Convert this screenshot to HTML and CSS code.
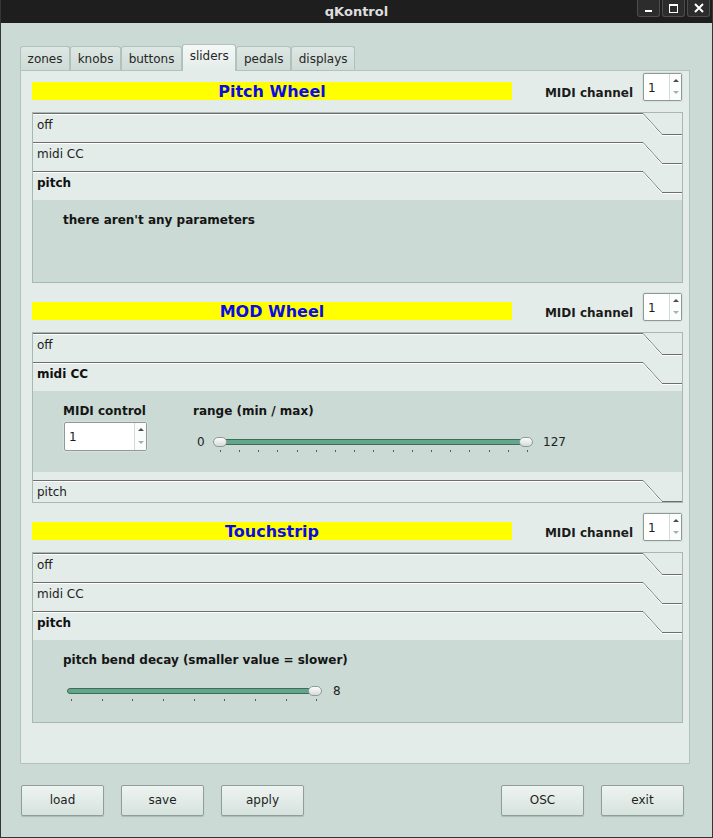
FILE: index.html
```html
<!DOCTYPE html>
<html>
<head>
<meta charset="utf-8">
<link rel="stylesheet" href="styles.css">
</head>
<body>
<div class="window">
  <div class="titlebar">
    <div></div>
    <div class="title">qKontrol</div>
    <div class="wm-buttons">
      <span class="wm-btn"><svg width="9" height="9" viewBox="0 0 9 9"><rect x="1" y="6" width="7" height="2" fill="#fff"/></svg></span>
      <span class="wm-btn"><svg width="9" height="9" viewBox="0 0 9 9"><rect x="0.5" y="0.5" width="8" height="8" fill="none" stroke="#fff"/><rect x="0" y="0" width="9" height="2" fill="#fff"/></svg></span>
      <span class="wm-btn"><svg width="10" height="10" viewBox="0 0 10 10"><path d="M1 1L9 9M9 1L1 9" stroke="#fff" stroke-width="2"/></svg></span>
    </div>
  </div>
  <div class="client">
    <div class="tabbar">
      <div class="tab">zones</div>
      <div class="tab">knobs</div>
      <div class="tab">buttons</div>
      <div class="tab active">sliders</div>
      <div class="tab">pedals</div>
      <div class="tab">displays</div>
    </div>
    <div class="page">
      <!-- Pitch Wheel -->
      <div class="section">
        <div class="section-head">
          <div class="banner">Pitch Wheel</div>
          <div class="ch-label">MIDI channel</div>
          <div class="spin ch"><span class="spin-val">1</span><span class="spin-arrows"><i class="arr-up"></i><i class="arr-down"></i></span></div>
        </div>
        <div class="toolbox">
          <div class="tb-item"><div class="tb-label">off</div><svg class="notch" width="39" height="29" viewBox="0 0 39 29"><polyline class="nd" points="0,0.5 19,21.5 39,21.5"/><polyline class="nl" points="0,1.5 19,22.5 39,22.5"/></svg></div>
          <div class="tb-item"><div class="tb-label">midi CC</div><svg class="notch" width="39" height="29" viewBox="0 0 39 29"><polyline class="nd" points="0,0.5 19,21.5 39,21.5"/><polyline class="nl" points="0,1.5 19,22.5 39,22.5"/></svg></div>
          <div class="tb-item"><div class="tb-label bold">pitch</div><svg class="notch" width="39" height="29" viewBox="0 0 39 29"><polyline class="nd" points="0,0.5 19,21.5 39,21.5"/><polyline class="nl" points="0,1.5 19,22.5 39,22.5"/></svg></div>
          <div class="tb-page p82">
            <div class="param-label">there aren't any parameters</div>
          </div>
        </div>
      </div>

      <!-- MOD Wheel -->
      <div class="section">
        <div class="section-head">
          <div class="banner">MOD Wheel</div>
          <div class="ch-label">MIDI channel</div>
          <div class="spin ch"><span class="spin-val">1</span><span class="spin-arrows"><i class="arr-up"></i><i class="arr-down"></i></span></div>
        </div>
        <div class="toolbox">
          <div class="tb-item"><div class="tb-label">off</div><svg class="notch" width="39" height="29" viewBox="0 0 39 29"><polyline class="nd" points="0,0.5 19,21.5 39,21.5"/><polyline class="nl" points="0,1.5 19,22.5 39,22.5"/></svg></div>
          <div class="tb-item"><div class="tb-label bold">midi CC</div><svg class="notch" width="39" height="29" viewBox="0 0 39 29"><polyline class="nd" points="0,0.5 19,21.5 39,21.5"/><polyline class="nl" points="0,1.5 19,22.5 39,22.5"/></svg></div>
          <div class="tb-page p81 cc-page">
            <div class="cc-col">
              <div class="param-label">MIDI control</div>
              <div class="spin ctl"><span class="spin-val">1</span><span class="spin-arrows"><i class="arr-up"></i><i class="arr-down"></i></span></div>
            </div>
            <div class="range-col">
              <div class="param-label">range (min / max)</div>
              <div class="slider-row">
                <span class="val v0">0</span>
                <svg class="slider" width="320" height="18" viewBox="0 0 320 18">
                  <defs><linearGradient id="hg1" x1="0" y1="0" x2="0" y2="1"><stop offset="0" stop-color="#ffffff"/><stop offset="1" stop-color="#d2d9d6"/></linearGradient></defs>
                  <rect x="1.5" y="2.5" width="317" height="5" rx="2.5" fill="#62a78b" stroke="#3e6c59"/>
                  <g fill="#5a5a5a">
                    <rect x="7" y="13" width="1" height="2"/><rect x="26" y="13" width="1" height="2"/><rect x="45" y="13" width="1" height="2"/><rect x="64" y="13" width="1" height="2"/><rect x="84" y="13" width="1" height="2"/><rect x="103" y="13" width="1" height="2"/><rect x="122" y="13" width="1" height="2"/><rect x="141" y="13" width="1" height="2"/><rect x="160" y="13" width="1" height="2"/><rect x="180" y="13" width="1" height="2"/><rect x="199" y="13" width="1" height="2"/><rect x="218" y="13" width="1" height="2"/><rect x="237" y="13" width="1" height="2"/><rect x="256" y="13" width="1" height="2"/><rect x="276" y="13" width="1" height="2"/><rect x="295" y="13" width="1" height="2"/><rect x="314" y="13" width="1" height="2"/>
                  </g>
                  <rect x="0.5" y="0.5" width="13" height="9" rx="4.5" fill="url(#hg1)" stroke="#8e9a95"/>
                  <rect x="306.5" y="0.5" width="13" height="9" rx="4.5" fill="url(#hg1)" stroke="#8e9a95"/>
                </svg>
                <span class="val v127">127</span>
              </div>
            </div>
          </div>
          <div class="tb-spacer"></div>
          <div class="tb-item short"><div class="tb-label">pitch</div><svg class="notch" width="39" height="29" viewBox="0 0 39 29"><polyline class="nd" points="0,0.5 19,21.5 39,21.5"/><polyline class="nl" points="0,1.5 19,22.5 39,22.5"/></svg></div>
        </div>
      </div>

      <!-- Touchstrip -->
      <div class="section">
        <div class="section-head">
          <div class="banner">Touchstrip</div>
          <div class="ch-label">MIDI channel</div>
          <div class="spin ch"><span class="spin-val">1</span><span class="spin-arrows"><i class="arr-up"></i><i class="arr-down"></i></span></div>
        </div>
        <div class="toolbox">
          <div class="tb-item"><div class="tb-label">off</div><svg class="notch" width="39" height="29" viewBox="0 0 39 29"><polyline class="nd" points="0,0.5 19,21.5 39,21.5"/><polyline class="nl" points="0,1.5 19,22.5 39,22.5"/></svg></div>
          <div class="tb-item"><div class="tb-label">midi CC</div><svg class="notch" width="39" height="29" viewBox="0 0 39 29"><polyline class="nd" points="0,0.5 19,21.5 39,21.5"/><polyline class="nl" points="0,1.5 19,22.5 39,22.5"/></svg></div>
          <div class="tb-item"><div class="tb-label bold">pitch</div><svg class="notch" width="39" height="29" viewBox="0 0 39 29"><polyline class="nd" points="0,0.5 19,21.5 39,21.5"/><polyline class="nl" points="0,1.5 19,22.5 39,22.5"/></svg></div>
          <div class="tb-page p82">
            <div class="param-label">pitch bend decay (smaller value = slower)</div>
            <div class="slider-row decay">
              <svg class="slider" width="256" height="18" viewBox="0 0 256 18">
                <defs><linearGradient id="hg2" x1="0" y1="0" x2="0" y2="1"><stop offset="0" stop-color="#ffffff"/><stop offset="1" stop-color="#d2d9d6"/></linearGradient></defs>
                <rect x="1.5" y="2.5" width="253" height="5" rx="2.5" fill="#62a78b" stroke="#3e6c59"/>
                <g fill="#5a5a5a">
                  <rect x="5" y="13" width="1" height="2"/><rect x="36" y="13" width="1" height="2"/><rect x="66" y="13" width="1" height="2"/><rect x="97" y="13" width="1" height="2"/><rect x="128" y="13" width="1" height="2"/><rect x="158" y="13" width="1" height="2"/><rect x="189" y="13" width="1" height="2"/><rect x="220" y="13" width="1" height="2"/><rect x="250" y="13" width="1" height="2"/>
                </g>
                <rect x="242.5" y="0.5" width="13" height="9" rx="4.5" fill="url(#hg2)" stroke="#8e9a95"/>
              </svg>
              <span class="val v8">8</span>
            </div>
          </div>
        </div>
      </div>
    </div>
    <div class="buttons">
      <div class="btn">load</div>
      <div class="btn">save</div>
      <div class="btn">apply</div>
      <div class="spacer"></div>
      <div class="btn">OSC</div>
      <div class="btn">exit</div>
    </div>
  </div>
</div>
</body>
</html>
```
FILE: styles.css
```css
* { box-sizing: border-box; }
body {
  margin: 0;
  width: 713px;
  height: 838px;
  overflow: hidden;
  background: #cbdad4;
  font-family: "DejaVu Sans", sans-serif;
  font-size: 12px;
  color: #1b1b1b;
}
.window {
  width: 713px;
  height: 838px;
  display: flex;
  flex-direction: column;
  border: 1px solid #353535;
  border-top: 0;
}
.titlebar {
  height: 23px;
  flex: none;
  background: #1e1e1e;
  display: grid;
  grid-template-columns: 1fr auto 1fr;
  align-items: center;
}
.title {
  color: #dedede;
  font-weight: bold;
  font-size: 13px;
  line-height: 23px;
}
.wm-buttons {
  justify-self: end;
  align-self: start;
  display: flex;
  gap: 2px;
  margin-right: 2px;
}
.wm-btn {
  width: 23px;
  height: 17px;
  background: #2c2c2c;
  border: 1px solid #4d4d4d;
  border-top: 0;
  border-radius: 0 0 3px 3px;
  display: flex;
  align-items: center;
  justify-content: center;
}
.client {
  flex: 1;
  display: flex;
  flex-direction: column;
  padding: 21px 22px 21px 19px;
}
.tabbar {
  display: flex;
  align-items: flex-end;
  height: 26px;
  flex: none;
}
.tab {
  height: 24px;
  padding: 0 6.6px;
  border: 1px solid #b2c2bb;
  border-bottom: 0;
  border-radius: 3px 3px 0 0;
  background: linear-gradient(#dde7e3, #cedbd6);
  line-height: 24px;
  color: #262626;
}
.tab.active {
  position: relative;
  z-index: 1;
  height: 27px;
  margin-bottom: -1px;
  background: linear-gradient(#f4f8f6, #e3ece8);
  line-height: 23px;
}
.page {
  height: 694px;
  flex: none;
  border: 1px solid #b3c3bc;
  background: #e3ece8;
  padding: 2px 6px 0 11px;
}
.section + .section { margin-top: 10px; }
.section-head {
  display: flex;
  align-items: flex-end;
  height: 28px;
}
.banner {
  width: 480px;
  height: 18px;
  margin-bottom: 1px;
  background: #ffff00;
  color: #0b0be8;
  font-weight: bold;
  font-size: 16px;
  line-height: 20px;
  text-align: center;
}
.ch-label {
  margin-left: auto;
  font-weight: bold;
  line-height: 16px;
  margin-bottom: 0;
}
.spin {
  display: flex;
  background: #fff;
  border: 1px solid #8d9a95;
  border-radius: 2px;
  box-shadow: 0 0 0 1px #d6e0dc;
}
.spin.ch {
  width: 39px;
  height: 28px;
  margin-left: 10px;
  margin-right: 1px;
}
.spin.ctl {
  width: 83px;
  height: 29px;
  margin-top: 4px;
  margin-left: 1px;
}
.spin-val {
  flex: 1;
  padding-left: 4px;
  padding-top: 1px;
  display: flex;
  align-items: center;
}
.spin-arrows {
  width: 12px;
  border-left: 1px solid #d3dbd8;
  background: #fbfcfc;
  display: flex;
  flex-direction: column;
  justify-content: space-between;
  align-items: center;
  padding: 5px 0 6px;
}
.arr-up {
  width: 0;
  height: 0;
  border-left: 3px solid transparent;
  border-right: 3px solid transparent;
  border-bottom: 3px solid #4a4a4a;
}
.arr-down {
  width: 0;
  height: 0;
  border-left: 3px solid transparent;
  border-right: 3px solid transparent;
  border-top: 3px solid #a2b2ac;
}
.toolbox {
  margin-top: 11px;
  height: 171px;
  border: 1px solid #a8b8b1;
  display: flex;
  flex-direction: column;
  overflow: hidden;
  background: #e3ece8;
}
.tb-item {
  display: flex;
  height: 29px;
  flex: none;
  overflow: hidden;
}
.tb-item.short { height: 22px; }
.tb-label {
  flex: 1;
  border-top: 1px solid #6e6e6e;
  box-shadow: inset 0 1px 0 #ffffff;
  padding: 4px 0 0 4px;
  line-height: 14px;
  color: #222;
}
.tb-label.bold { font-weight: bold; color: #111; }
.notch { flex: none; display: block; }
.notch .nd { fill: none; stroke: #6e6e6e; stroke-width: 1; }
.notch .nl { fill: none; stroke: #ffffff; stroke-width: 1; }
.tb-page {
  background: #cbdad4;
  flex: none;
  padding: 13px 0 0 30px;
}
.tb-page.p82 { height: 82px; }
.tb-page.p81 { height: 81px; }
.tb-spacer { height: 8px; flex: none; }
.param-label {
  font-weight: bold;
  line-height: 14px;
  color: #151515;
}
.cc-page {
  display: flex;
  align-items: flex-start;
}
.cc-col { width: 130px; }
.range-col { display: flex; flex-direction: column; }
.slider-row {
  display: flex;
  align-items: flex-start;
  margin-top: 17px;
}
.slider { display: block; margin-top: 2px; flex: none; }
.val { line-height: 14px; color: #222; }
.v0 { margin-left: 4px; width: 16px; }
.v127 { margin-left: 10px; }
.decay .slider { margin-left: 3px; }
.v8 { margin-left: 11px; }
.buttons {
  margin-top: 21px;
  height: 31px;
  flex: none;
  display: flex;
  gap: 17px;
  padding: 0 6px 0 1px;
}
.spacer { flex: 1; }
.btn {
  width: 83px;
  height: 31px;
  border: 1px solid #8f9e98;
  border-radius: 2px;
  background: linear-gradient(#eef4f1, #d6e2dd);
  box-shadow: 0 1px 1px rgba(0, 0, 0, 0.15);
  text-align: center;
  line-height: 29px;
  color: #1e1e1e;
}
```
